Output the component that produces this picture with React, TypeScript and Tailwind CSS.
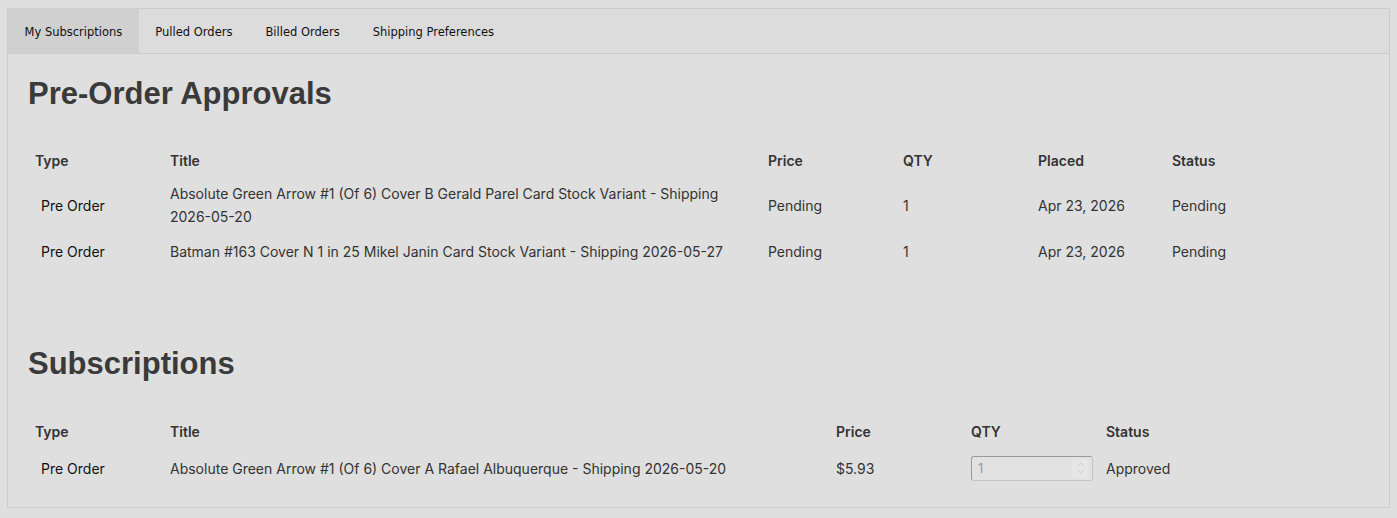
import React from 'react';

interface Row {
  type: string;
  title: string;
  price: string;
  qty: string;
  placed?: string;
  status: string;
}

const approvals: Row[] = [
  {
    type: 'Pre Order',
    title: 'Absolute Green Arrow #1 (Of 6) Cover B Gerald Parel Card Stock Variant - Shipping 2026-05-20',
    price: 'Pending',
    qty: '1',
    placed: 'Apr 23, 2026',
    status: 'Pending',
  },
  {
    type: 'Pre Order',
    title: 'Batman #163 Cover N 1 in 25 Mikel Janin Card Stock Variant - Shipping 2026-05-27',
    price: 'Pending',
    qty: '1',
    placed: 'Apr 23, 2026',
    status: 'Pending',
  },
];

const tabs = ['My Subscriptions', 'Pulled Orders', 'Billed Orders', 'Shipping Preferences'];

const App: React.FC = () => {
  return (
    <div className="min-h-screen bg-[#dfdfdf] px-[7px] pt-[8px] font-['Inter',sans-serif] text-[#333]">
      <div className="border border-[#cccccc] bg-[#dfdfdf] h-[500px]">
        {/* tabs */}
        <div className="flex h-[45px] border-b border-[#cccccc] bg-[#dcdcdc] font-['DejaVu_Sans',sans-serif] text-[11.5px] text-[#111]">
          {tabs.map((tab, i) => (
            <div
              key={tab}
              className={
                i === 0
                  ? 'flex items-center px-[16.5px] pt-[4px] bg-[#d0d0d0]'
                  : 'flex items-center px-[16.5px] pt-[4px]'
              }
            >
              {tab}
            </div>
          ))}
        </div>

        <div className="px-[20px]">
          <h1 className="mt-[22px] font-['Liberation_Sans',sans-serif] text-[31px] font-bold leading-[36px] text-[#3a3a3a]">
            Pre-Order Approvals
          </h1>

          <table className="mt-[32px] w-full table-fixed text-[14px]">
            <colgroup>
              <col className="w-[135px]" />
              <col className="w-[598px]" />
              <col className="w-[135px]" />
              <col className="w-[135px]" />
              <col className="w-[134px]" />
              <col />
            </colgroup>
            <thead>
              <tr className="h-[32px] text-left">
                <th className="px-[7px] font-semibold">Type</th>
                <th className="px-[7px] font-semibold">Title</th>
                <th className="px-[7px] font-semibold">Price</th>
                <th className="px-[7px] font-semibold">QTY</th>
                <th className="px-[7px] font-semibold">Placed</th>
                <th className="px-[7px] font-semibold">Status</th>
              </tr>
            </thead>
            <tbody className="leading-[23px]">
              {approvals.map((r, i) => (
                <tr key={r.title} className={i === 0 ? 'h-[58px]' : 'h-[34px]'}>
                  <td className="pl-[13px] pr-[7px] text-[#111]">{r.type}</td>
                  <td className="px-[7px]">{r.title}</td>
                  <td className="px-[7px]">{r.price}</td>
                  <td className="px-[7px]">{r.qty}</td>
                  <td className="px-[7px]">{r.placed}</td>
                  <td className="px-[7px]">{r.status}</td>
                </tr>
              ))}
            </tbody>
          </table>

          <h1 className="mt-[78px] font-['Liberation_Sans',sans-serif] text-[31px] font-bold leading-[36px] text-[#3a3a3a]">
            Subscriptions
          </h1>

          <table className="mt-[33px] w-full table-fixed text-[14px]">
            <colgroup>
              <col className="w-[135px]" />
              <col className="w-[666px]" />
              <col className="w-[135px]" />
              <col className="w-[135px]" />
              <col />
            </colgroup>
            <thead>
              <tr className="h-[32px] text-left">
                <th className="px-[7px] font-semibold">Type</th>
                <th className="px-[7px] font-semibold">Title</th>
                <th className="px-[7px] font-semibold">Price</th>
                <th className="px-[7px] font-semibold">QTY</th>
                <th className="px-[7px] font-semibold">Status</th>
              </tr>
            </thead>
            <tbody className="leading-[23px]">
              <tr className="h-[42px]">
                <td className="pl-[13px] pr-[7px] text-[#111]">Pre Order</td>
                <td className="px-[7px]">Absolute Green Arrow #1 (Of 6) Cover A Rafael Albuquerque - Shipping 2026-05-20</td>
                <td className="px-[7px]">$5.93</td>
                <td className="px-[7px]">
                  <div className="flex h-[25px] w-[122px] items-center justify-between rounded-[3px] border border-[#c4c4c4] border-t-[#9a9a9a] border-l-[#9a9a9a] bg-[#e2e2e2] pl-[6px] pr-[4px] text-[13px] text-[#999]">
                    <span>1</span>
                    <span className="flex h-[19px] w-[16px] flex-col items-center justify-center rounded-[2px] bg-[#e6e6e6]">
                      <svg width="9" height="14" viewBox="0 0 9 14" fill="none" stroke="#c8c8c8" strokeWidth="1">
                        <path d="M1.5 5 L4.5 2 L7.5 5" />
                        <path d="M1.5 9 L4.5 12 L7.5 9" />
                      </svg>
                    </span>
                  </div>
                </td>
                <td className="px-[7px]">Approved</td>
              </tr>
            </tbody>
          </table>
        </div>
      </div>
    </div>
  );
};

export default App;
